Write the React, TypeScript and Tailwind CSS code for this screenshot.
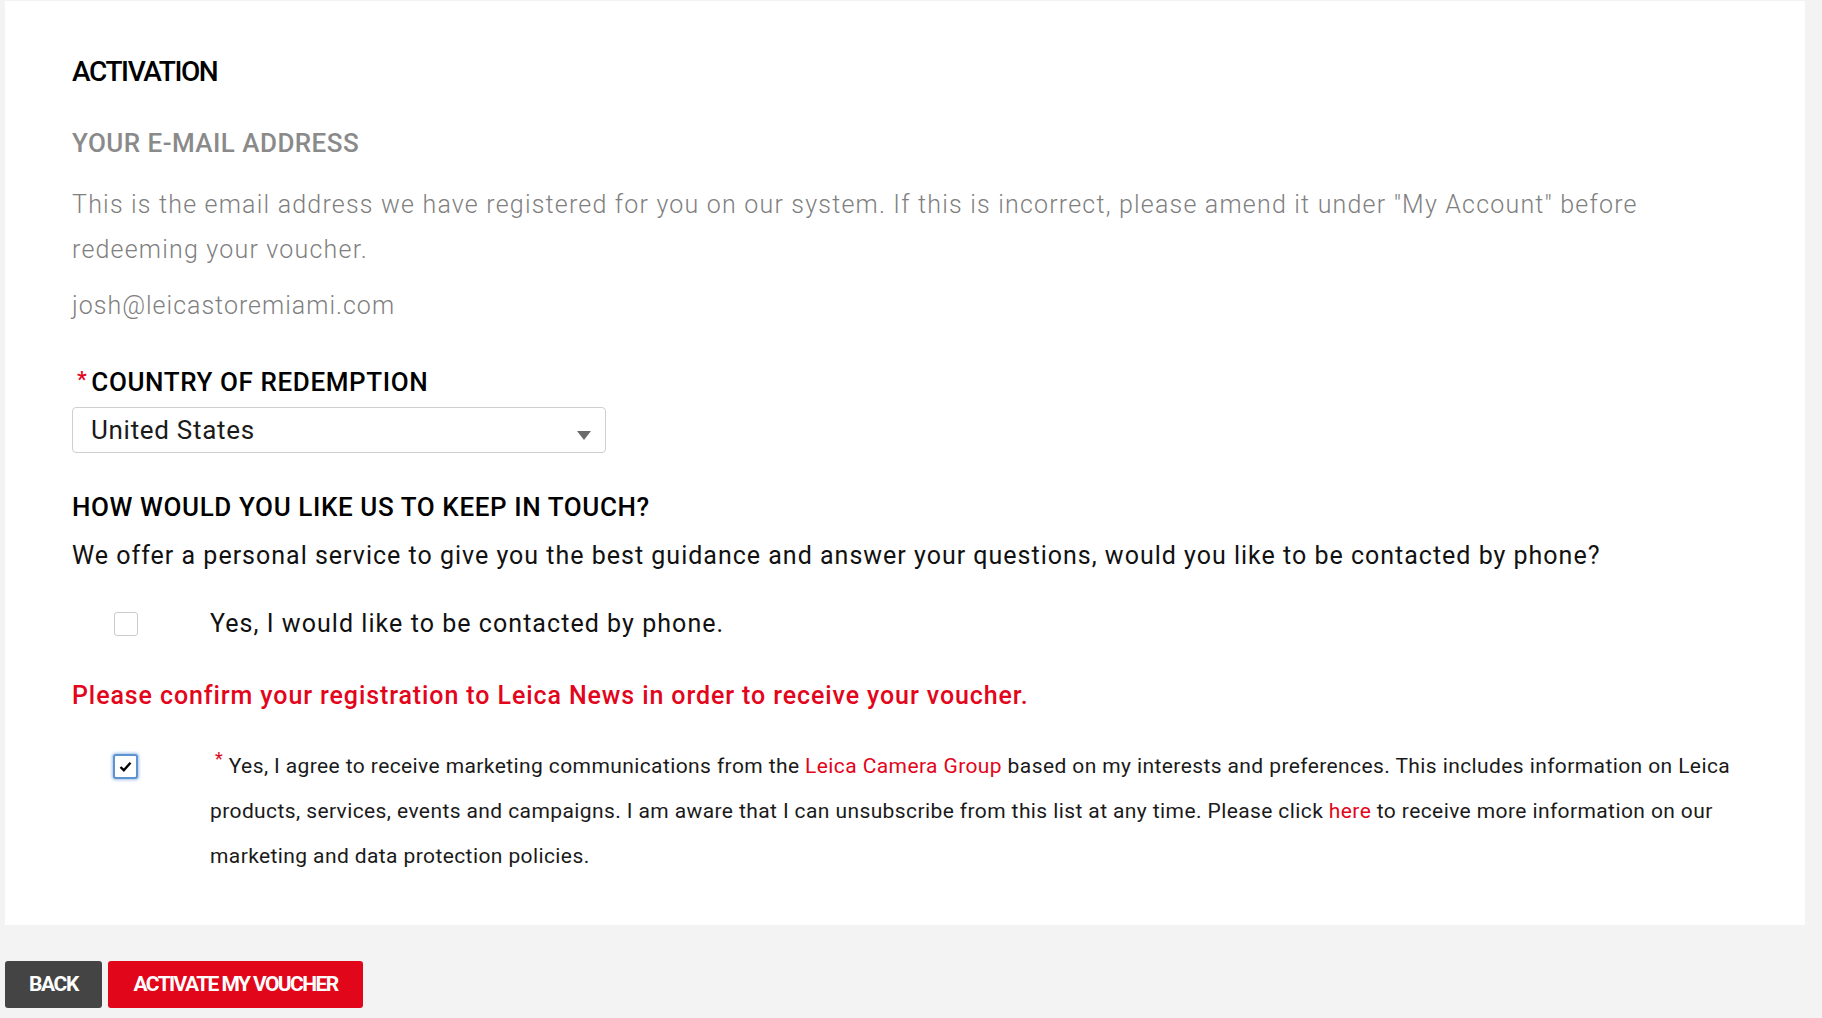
import React from "react";

const F = { fontFamily: "Roboto, 'Noto Sans', Arial, sans-serif" };

export default function App() {
  return (
    <div className="min-h-[1018px] w-full bg-[#f3f3f3]" style={F}>
      <div className="pt-px pl-[5px]">
        <div className="w-[1800px] bg-white pl-[67px] pr-[67px] pt-[54px] pb-[46px]">
          <h1 className="text-[28px] leading-[34px] font-medium text-black tracking-[-1.4px]">ACTIVATION</h1>
          <h2 className="mt-[38px] text-[26px] leading-[32px] font-medium text-[#8a8a8a] tracking-[0.45px]">
            YOUR E-MAIL ADDRESS
          </h2>
          <p className="mt-[23px] w-[1640px] text-[25px] leading-[45px] font-light text-[#7f7f7f] tracking-[1.2px]">
            This is the email address we have registered for you on our system. If this is incorrect, please amend it under "My Account" before redeeming your voucher.
          </p>
          <p className="mt-[11px] text-[25px] leading-[45px] font-light text-[#7f7f7f] tracking-[1px]">josh@leicastoremiami.com</p>

          <div className="mt-[38px] flex items-center text-[26px] leading-[32px] font-medium text-black tracking-[0.6px]">
            <span className="mr-[4px] ml-[5px] text-[#e2051b] text-[22px] self-start leading-[28px]">*</span>
            <span>COUNTRY OF REDEMPTION</span>
          </div>
          <div className="mt-[9px] flex h-[46px] w-[534px] items-center justify-between rounded-[4px] border border-[#cfcfcf] pl-[18px] pr-[14px]">
            <span className="text-[26px] text-[#1a1a1a] tracking-[0.7px]">United States</span>
            <svg width="14" height="9" viewBox="0 0 14 9" className="mt-[10px]">
              <polygon points="0,0 14,0 7,9" fill="#6b6b6b" />
            </svg>
          </div>

          <h3 className="mt-[38px] text-[26px] leading-[32px] font-medium text-black tracking-[0.6px]">
            HOW WOULD YOU LIKE US TO KEEP IN TOUCH?
          </h3>
          <p className="mt-[15px] text-[25px] leading-[36px] text-[#111] tracking-[1px]">
            We offer a personal service to give you the best guidance and answer your questions, would you like to be contacted by phone?
          </p>

          <div className="mt-[27px] flex h-[46px] items-center">
            <div className="ml-[42px] h-[24px] w-[24px] rounded-[3px] border border-[#cccccc] bg-white" />
            <span className="ml-[72px] text-[25px] text-[#111] tracking-[1.05px]">Yes, I would like to be contacted by phone.</span>
          </div>

          <p className="mt-[33px] text-[25px] leading-[32px] font-medium text-[#e2051b] tracking-[0.9px]">
            Please confirm your registration to Leica News in order to receive your voucher.
          </p>

          <div className="mt-[32px] flex items-start">
            <div className="ml-[41px] mt-[10px] flex h-[25px] w-[25px] shrink-0 items-center justify-center rounded-[3px] border-2 border-[#5e93d1] bg-white shadow-[0_0_3px_1px_rgba(80,140,210,0.55)]">
              <svg width="13" height="11" viewBox="0 0 13 11">
                <path d="M1.5 6 L4.8 9.2 L11.5 1.8" fill="none" stroke="#000" strokeWidth="2.4" />
              </svg>
            </div>
            <p className="ml-[72px] w-[1540px] text-[21px] leading-[45px] text-[#1a1a1a] tracking-[0.4px]">
              <span className="ml-[5px] text-[#e2051b] align-top text-[18px] leading-[30px]">*</span> Yes, I agree to receive marketing communications from the{" "}
              <span className="text-[#e2051b]">Leica Camera Group</span> based on my interests and preferences. This includes information on Leica products, services, events and campaigns. I am aware that I can unsubscribe from this list at any time. Please click{" "}
              <span className="text-[#e2051b]">here</span> to receive more information on our marketing and data protection policies.
            </p>
          </div>
        </div>
      </div>

      <div className="mt-[36px] flex gap-[6px] pl-[5px]">
        <button className="h-[47px] w-[97px] rounded-[3px] bg-[#444444] text-[21px] font-bold text-white tracking-[-1.4px]">
          BACK
        </button>
        <button className="h-[47px] w-[255px] rounded-[3px] bg-[#e2061a] text-[21px] font-bold text-white tracking-[-1.6px]">
          ACTIVATE MY VOUCHER
        </button>
      </div>
    </div>
  );
}
